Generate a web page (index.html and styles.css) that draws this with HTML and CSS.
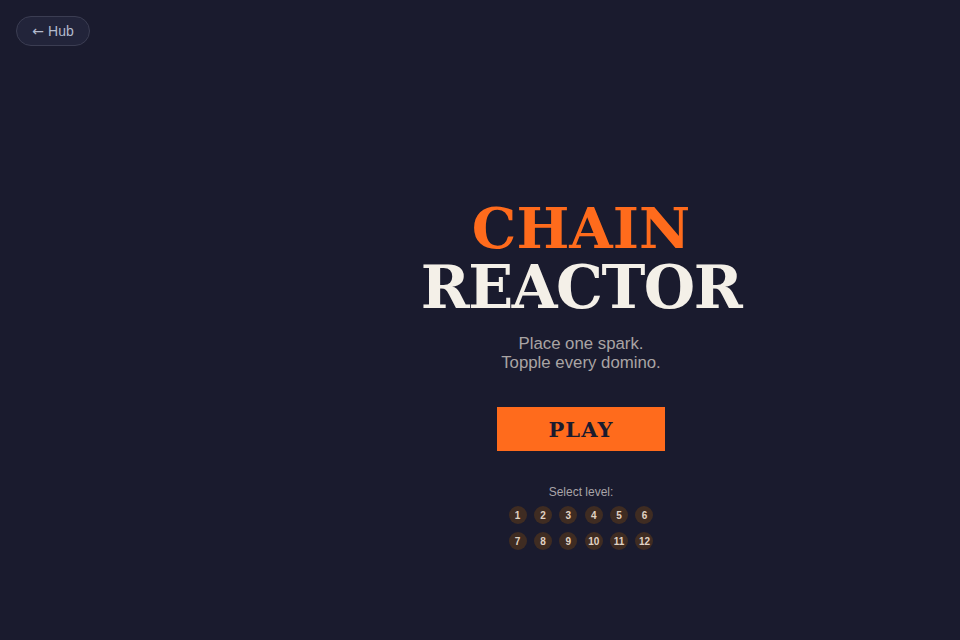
FILE: index.html
```html
<!DOCTYPE html>
<html>
<head>
<meta charset="utf-8">
<link rel="stylesheet" href="styles.css">
</head>
<body>
<a class="hub" href="#"><span class="arrow">←</span> Hub</a>
<main class="stage">
  <div class="menu">
    <h1 class="title"><span class="t1">CHAIN</span><span class="t2">REACTOR</span></h1>
    <p class="tag">Place one spark.<br>Topple every domino.</p>
    <button class="play">PLAY</button>
    <div class="levels">
      <div class="lv-label">Select level:</div>
      <div class="grid">
        <span class="dot">1</span><span class="dot">2</span><span class="dot">3</span><span class="dot">4</span><span class="dot">5</span><span class="dot">6</span>
        <span class="dot">7</span><span class="dot">8</span><span class="dot">9</span><span class="dot">10</span><span class="dot">11</span><span class="dot">12</span>
      </div>
    </div>
  </div>
</main>
</body>
</html>
```
FILE: styles.css
```css
html, body {
  margin: 0;
  height: 100%;
  background: #1a1b2e;
  overflow: hidden;
}
body {
  font-family: "Liberation Sans", Arial, sans-serif;
}
.hub {
  position: absolute;
  left: 16px;
  top: 16px;
  height: 30px;
  width: 74px;
  box-sizing: border-box;
  border: 1px solid #3b3d52;
  border-radius: 15px;
  background: #22243a;
  color: #b3bacd;
  font-size: 14px;
  text-decoration: none;
  display: flex;
  align-items: center;
  justify-content: center;
  gap: 4px;
}
.arrow {
  font-family: "DejaVu Sans", sans-serif;
  font-size: 14px;
  line-height: 14px;
}
.stage {
  height: 100%;
  display: flex;
  justify-content: center;
  padding-left: 202px;
  box-sizing: border-box;
}
.menu {
  display: flex;
  flex-direction: column;
  align-items: center;
  padding-top: 199px;
}
.title {
  margin: 0;
  display: flex;
  flex-direction: column;
  align-items: center;
  font-family: "DejaVu Serif", serif;
  font-weight: bold;
}
.t1 {
  color: #ff6b1c;
  font-size: 56px;
  line-height: 59px;
}
.t2 {
  color: #f4f0e8;
  font-size: 59px;
  line-height: 60px;
  letter-spacing: -1.5px;
}
.tag {
  margin: 16px 0 0;
  text-align: center;
  color: #a9a4a4;
  font-size: 16.8px;
  line-height: 19px;
}
.play {
  margin-top: 35px;
  width: 168px;
  height: 44px;
  border: none;
  background: #ff6b1c;
  color: #1a1b2e;
  font-family: "DejaVu Serif", serif;
  font-weight: bold;
  font-size: 21px;
  letter-spacing: 1px;
  padding: 0;
}
.levels {
  margin-top: 34px;
  display: flex;
  flex-direction: column;
  align-items: center;
}
.lv-label {
  color: #a9a4a8;
  font-size: 12px;
  line-height: 14px;
}
.grid {
  margin-top: 7px;
  display: grid;
  grid-template-columns: repeat(6, 18px);
  column-gap: 7.4px;
  row-gap: 8px;
}
.dot {
  width: 18px;
  height: 18px;
  border-radius: 50%;
  background: #3f2c22;
  color: #e0d2c4;
  font-size: 10px;
  font-weight: bold;
  display: flex;
  align-items: center;
  justify-content: center;
}
```
